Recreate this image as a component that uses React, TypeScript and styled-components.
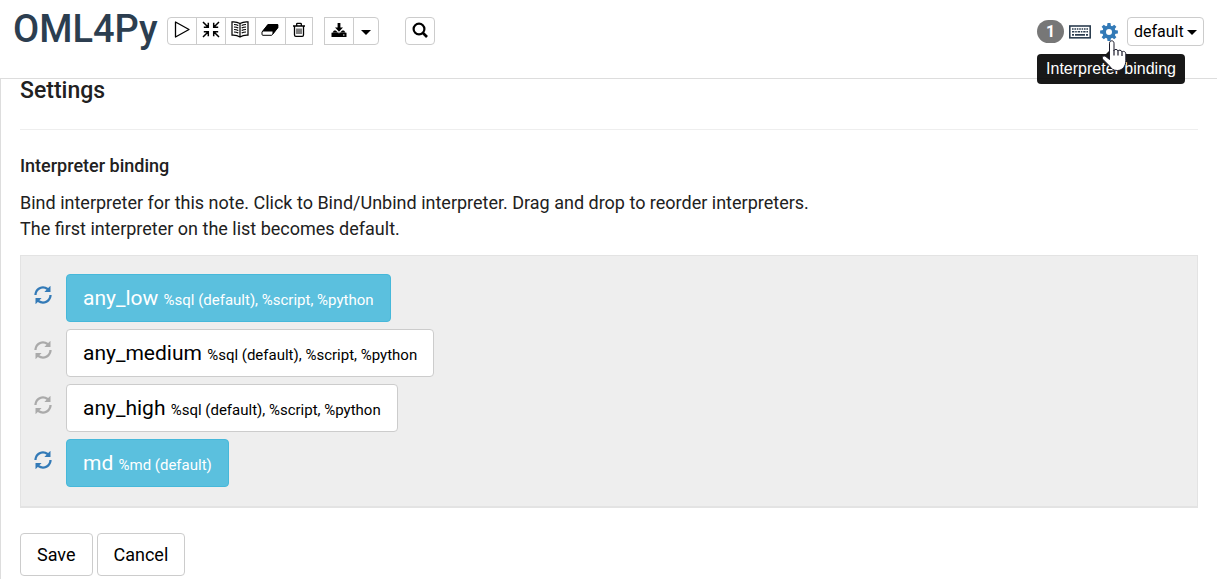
import React from "react";
import styled, { createGlobalStyle, css } from "styled-components";

const GlobalStyle = createGlobalStyle`
  *, *::before, *::after { box-sizing: border-box; }
  body {
    margin: 0;
    background: #fff;
    color: #212121;
    font-family: Roboto, "Liberation Sans", sans-serif;
    font-size: 18px;
    line-height: 26px;
  }
  button, select { font-family: inherit; cursor: pointer; }
`;

const Page = styled.div`
  display: flex;
  flex-direction: column;
  min-height: 100vh;
`;

const Header = styled.header`
  display: flex;
  align-items: flex-start;
  height: 78px;
  padding: 0 13px;
`;

const NoteTitle = styled.h1`
  margin: 6px 9px 0 0;
  font-size: 38px;
  line-height: 46px;
  font-weight: 500;
  color: #2c3e50;
`;

const Toolbar = styled.div`
  display: flex;
  margin-top: 17px;
`;

const ButtonGroup = styled.div<{ $gap?: number }>`
  display: flex;
  margin-right: ${(p) => p.$gap ?? 0}px;
`;

const ToolButton = styled.button<{ $round?: "left" | "right" | "all"; $width?: number; $caret?: boolean }>`
  display: flex;
  align-items: center;
  justify-content: center;
  width: ${(p) => p.$width ?? 30}px;
  height: 28px;
  padding: ${(p) => (p.$caret ? "2px 0 0" : "0 0 2px")};
  border: 1px solid #ccc;
  background: #fff;
  color: #000;
  border-radius: ${(p) =>
    p.$round === "left" ? "4px 0 0 4px" : p.$round === "right" ? "0 4px 4px 0" : p.$round === "all" ? "4px" : "0"};
  & + & { margin-left: -1px; }
  svg { display: block; }
`;

const Actions = styled.div`
  display: flex;
  align-items: center;
  height: 29px;
  margin-top: 17px;
  margin-left: auto;
`;

const Badge = styled.span`
  width: 27px;
  height: 23px;
  margin-right: 5px;
  border-radius: 12px;
  background: #777;
  color: #fff;
  font-size: 16px;
  line-height: 23px;
  font-weight: 700;
  text-align: center;
`;

const IconButton = styled.button<{ $color: string; $gap: number }>`
  display: flex;
  padding: 0;
  border: 0;
  margin-right: ${(p) => p.$gap}px;
  background: transparent;
  color: ${(p) => p.$color};
`;

const TooltipAnchor = styled.div`
  position: relative;
  display: flex;
`;

const Tooltip = styled.div`
  position: absolute;
  top: 31px;
  left: -63px;
  width: 148px;
  height: 30px;
  border-radius: 4px;
  background: #000;
  color: #fff;
  opacity: 0.9;
  font-family: "Liberation Sans", Arial, sans-serif;
  font-size: 16px;
  line-height: 30px;
  text-align: center;
  white-space: nowrap;
  &::before {
    content: "";
    position: absolute;
    top: -5px;
    left: 69px;
    border: 5px solid transparent;
    border-top: 0;
    border-bottom-color: #000;
  }
`;

const Pointer = styled.svg`
  position: absolute;
  top: 17px;
  left: 1px;
`;

const SelectWrap = styled.div`
  position: relative;
  display: flex;
  svg {
    position: absolute;
    right: 7px;
    top: 13px;
    pointer-events: none;
  }
`;

const LookSelect = styled.select`
  appearance: none;
  width: 77px;
  height: 29px;
  padding: 0 0 0 6px;
  border: 1px solid #ccc;
  border-radius: 4px;
  background: #fff;
  color: #000;
  font-size: 16px;
  line-height: 24px;
`;

const Main = styled.main`
  flex: 1;
  padding: 0 19px 3px;
  border-top: 1px solid #ddd;
  border-left: 1px solid #ddd;
`;

const SettingsTitle = styled.h2`
  margin: 0;
  padding-bottom: 26px;
  border-bottom: 1px solid #eee;
  font-size: 23px;
  line-height: 24px;
  font-weight: 500;
`;

const SectionTitle = styled.h3`
  margin: 23px 0 11px;
  font-size: 18px;
  line-height: 26px;
  font-weight: 500;
`;

const Description = styled.p`
  margin: 0 0 13px;
`;

const BindingList = styled.ul`
  display: flex;
  flex-direction: column;
  gap: 8px;
  margin: 0;
  padding: 18px 13px 20px;
  list-style: none;
  background: #eee;
  border: 1px solid #e3e3e3;
  border-bottom-width: 2px;
`;

const BindingRow = styled.li`
  display: flex;
  align-items: flex-start;
  gap: 14px;
`;

const RestartButton = styled.button<{ $bound: boolean }>`
  display: flex;
  padding: 0;
  margin-top: 12px;
  border: 0;
  background: transparent;
  color: ${(p) => (p.$bound ? "#337ab7" : "#aaa")};
`;

const InterpreterButton = styled.button<{ $bound: boolean }>`
  height: 48px;
  margin-bottom: -1px;
  padding: 2px 16px 0;
  border: 1px solid #ccc;
  border-radius: 4px;
  background: #fff;
  color: #000;
  font-size: 21px;
  line-height: 28px;
  white-space: nowrap;
  small { font-size: 15px; }
  ${(p) =>
    p.$bound &&
    css`
      border-color: #46b8da;
      background: #5bc0de;
      color: #fff;
    `}
`;

const FormButtons = styled.div`
  display: flex;
  gap: 4px;
  margin-top: 25px;
`;

const FormButton = styled.button`
  height: 43px;
  padding: 0 16px;
  border: 1px solid #ccc;
  border-radius: 4px;
  background: #fff;
  color: #000;
  font-size: 18px;
  line-height: 26px;
`;

const Caret = () => (
  <svg width="10" height="5" viewBox="0 0 10 5" aria-hidden="true">
    <path d="M0 0h10L5 5z" fill="#000" />
  </svg>
);

const PlayIcon = () => (
  <svg width="18" height="18" viewBox="0 0 18 18" fill="none" stroke="currentColor" strokeWidth="1.3" strokeLinejoin="round">
    <path d="M2.500 1v15L16 8.500z" />
  </svg>
);

const CollapseIcon = () => (
  <svg width="18" height="18" viewBox="0 0 18 18" fill="none" stroke="currentColor" strokeWidth="1.5">
    <path d="M1 1l5 5M6.300 1.800v4.500H1.800M17 1l-5 5M11.700 1.800v4.500H16.200M1 16l5-5M6.300 15.200v-4.500H1.800M17 16l-5-5M11.700 15.200v-4.500H16.200" />
  </svg>
);

const BookIcon = () => (
  <svg width="18" height="18" viewBox="0 0 18 18" fill="none" stroke="currentColor" strokeWidth="1.2">
    <path d="M9 2.500C6.500 1 3.500.700 1 .9v13.300c2.500-.2 5.500.2 8 1.800 2.500-1.600 5.500-2 8-1.800V.9C14.500.700 11.500 1 9 2.500zM9 2.500v13.500" />
    <path d="M3 3.500c1.500 0 3 .3 4.300 1M3 6c1.500 0 3 .3 4.300 1M3 8.500c1.500 0 3 .3 4.300 1M3 11c1.500 0 3 .3 4.300 1M15 3.500c-1.500 0-3 .3-4.300 1M15 6c-1.500 0-3 .3-4.300 1M15 8.500c-1.500 0-3 .3-4.300 1M15 11c-1.500 0-3 .3-4.300 1" />
  </svg>
);

const EraserIcon = () => (
  <svg width="18" height="14" viewBox="0 0 18 14">
    <path
      d="M7 1.500h9.300q.9.300.5 1.200v2L11.500 11.500q-.4.800-1.200.8H1.800q-1-.2-.8-1.300V9z"
      fill="#fff"
      stroke="currentColor"
      strokeWidth="1"
      strokeLinejoin="round"
    />
    <path d="M7 1h9.500q1.300.5.600 1.700v2.100l-5.600 7V8.500H1.200z" fill="currentColor" />
  </svg>
);

const TrashIcon = () => (
  <svg width="14" height="16" viewBox="0 0 14 16" fill="none" stroke="currentColor" strokeWidth="1.300">
    <path d="M1 4h12M4.700 3.700V2q0-.7.700-.7h3.200q.7 0 .7.700v1.700M2.500 4.300v8.700q0 1.300 1.300 1.300h6.400q1.300 0 1.300-1.300V4.300" />
    <path d="M5 6.500v5.500M7 6.500v5.500M9 6.500v5.500" strokeWidth="1" />
  </svg>
);

const DownloadIcon = () => (
  <svg width="16" height="16" viewBox="0 0 16 16" fill="currentColor">
    <path d="M6.600 1h2.800v4.500H12L8 9.700 4 5.500h2.600z" />
    <path d="M3 8.500h1.800L8 11.400l3.200-2.900H13l1.500 2H1.500zM.5 10.700h15V15H.5zM12 12.500v1h1.500v-1z" fillRule="evenodd" />
  </svg>
);

const SearchIcon = () => (
  <svg width="18" height="18" viewBox="0 0 18 18" fill="none" stroke="currentColor" strokeWidth="2.200">
    <circle cx="8" cy="8" r="5.400" />
    <path d="M12 12l4 4" strokeWidth="2.600" />
  </svg>
);

const KeyboardIcon = () => (
  <svg width="22" height="14" viewBox="0 0 22 14" fill="none">
    <rect x="0.800" y="1" width="20.400" height="11.800" stroke="#2c3e50" strokeWidth="1.600" fill="#fff" />
    <path d="M3 4h16" stroke="#2c3e50" strokeWidth="1.600" strokeDasharray="1.600 .8" />
    <path d="M3 6.800h16" stroke="#2c3e50" strokeWidth="1.600" strokeDasharray="2.400 .8 1.600 .8" />
    <path d="M3 9.900h2M6 9.900h10M17 9.900h2" stroke="#2c3e50" strokeWidth="1.600" />
  </svg>
);

const toothAngles = [0, 45, 90, 135, 180, 225, 270, 315];

const GearIcon = () => (
  <svg width="18" height="18" viewBox="0 0 18 18" fill="currentColor">
    <circle cx="9" cy="9" r="4.800" fill="none" stroke="currentColor" strokeWidth="3.600" />
    {toothAngles.map((a) => (
      <path key={a} d="M7 3.500L7.500.1h3l.5 3.400z" transform={`rotate(${a} 9 9)`} />
    ))}
  </svg>
);

const RefreshIcon = () => (
  <svg width="18" height="18" viewBox="0 0 1200 1200" fill="currentColor" aria-hidden="true">
    <path
      transform="matrix(1 0 0 -1 0 1200)"
      d="M947 1060l135 135q7 7 12.500 5t5.500-13v-362q0-10-7.500-17.500t-17.500-7.500h-362q-11 0-13 5.500t5 12.500l133 133q-109 76-238 76q-116 0-214.500-57t-155.500-155.500t-57-214.500h-150q0 118 45.500 224.500t123 184t184 123t224.500 45.500q192 0 347-117zM1027 600h150q0-118-45.500-224.500t-123-184t-184-123t-224.500-45.500q-192 0-348 118l-134-134q-7-8-12.500-5.500t-5.500 12.500v360q0 11 7.500 18.500t17.500 7.500h360q10 0 12.500-5.500t-5.500-12.500l-135-135q110-77 240-77q116 0 214.500 57t155.500 155.500t57 214.500z"
    />
  </svg>
);

const HandPointer = () => (
  <Pointer width="26" height="32" viewBox="0 0 26 32" aria-hidden="true">
    <path
      d="M8.500 3.200c0-3.200 4.500-3.200 4.500 0v7.300c.4-1.600 3.600-1.500 4 .5.400-1.400 3.600-1.200 4 1 .6-1.200 3.800-.8 3.800 1.800v7c0 5-3 9.700-8.500 9.700-4 0-6-1.800-7.800-4.500L2 19.500c-1.800-2.700.8-4.500 3-2.800l3.500 2.800z"
      fill="#fff"
      stroke="#1b1b2b"
      strokeWidth="1"
    />
    <path d="M13 10v5.500M17 11v4.500M21 12v4" stroke="#1b1b2b" strokeWidth="1.200" />
  </Pointer>
);

const interpreters = [
  { name: "any_low", types: "%sql (default), %script, %python", bound: true },
  { name: "any_medium", types: "%sql (default), %script, %python", bound: false },
  { name: "any_high", types: "%sql (default), %script, %python", bound: false },
  { name: "md", types: "%md (default)", bound: true },
];

export default function App() {
  return (
    <Page>
      <GlobalStyle />
      <Header>
        <NoteTitle>OML4Py</NoteTitle>
        <Toolbar>
          <ButtonGroup $gap={11}>
            <ToolButton $round="left" aria-label="Run all paragraphs"><PlayIcon /></ToolButton>
            <ToolButton aria-label="Hide code"><CollapseIcon /></ToolButton>
            <ToolButton $width={31} aria-label="Hide output"><BookIcon /></ToolButton>
            <ToolButton $width={31} aria-label="Clear output"><EraserIcon /></ToolButton>
            <ToolButton $width={28} aria-label="Remove note"><TrashIcon /></ToolButton>
          </ButtonGroup>
          <ButtonGroup $gap={26}>
            <ToolButton aria-label="Export note"><DownloadIcon /></ToolButton>
            <ToolButton $width={26} $round="right" $caret aria-label="Export options"><Caret /></ToolButton>
          </ButtonGroup>
          <ToolButton $round="all" aria-label="Search code"><SearchIcon /></ToolButton>
        </Toolbar>
        <Actions>
          <Badge>1</Badge>
          <IconButton $color="#2c3e50" $gap={9} aria-label="Keyboard shortcuts"><KeyboardIcon /></IconButton>
          <TooltipAnchor>
            <IconButton $color="#337ab7" $gap={9} aria-label="Interpreter binding" aria-describedby="binding-tip">
              <GearIcon />
            </IconButton>
            <Tooltip id="binding-tip" role="tooltip">Interpreter binding</Tooltip>
            <HandPointer />
          </TooltipAnchor>
          <SelectWrap>
            <LookSelect aria-label="Look and feel" defaultValue="default">
              <option>default</option>
            </LookSelect>
            <Caret />
          </SelectWrap>
        </Actions>
      </Header>
      <Main>
        <SettingsTitle>Settings</SettingsTitle>
        <SectionTitle>Interpreter binding</SectionTitle>
        <Description>
          Bind interpreter for this note. Click to Bind/Unbind interpreter. Drag and drop to reorder interpreters.
          <br />
          The first interpreter on the list becomes default.
        </Description>
        <BindingList>
          {interpreters.map((it) => (
            <BindingRow key={it.name}>
              <RestartButton $bound={it.bound} aria-label={`Restart ${it.name}`}><RefreshIcon /></RestartButton>
              <InterpreterButton $bound={it.bound}>
                {it.name} <small>{it.types}</small>
              </InterpreterButton>
            </BindingRow>
          ))}
        </BindingList>
        <FormButtons>
          <FormButton>Save</FormButton>
          <FormButton>Cancel</FormButton>
        </FormButtons>
      </Main>
    </Page>
  );
}
